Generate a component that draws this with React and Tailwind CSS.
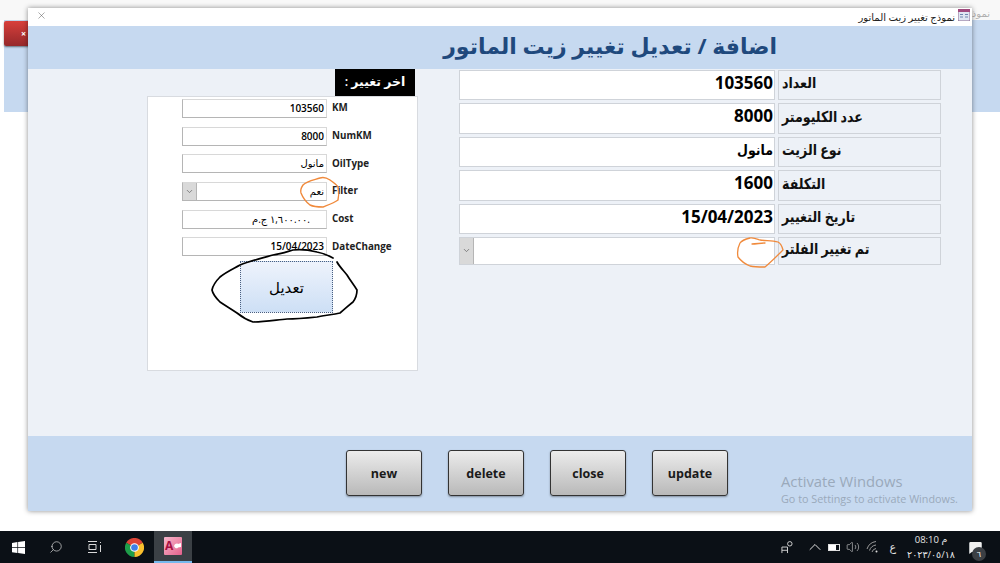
import { Search, ChevronUp, ChevronDown, Volume2, X, MessageSquare } from "lucide-react";

const arabic = "font-['Open_Sans','DejaVu_Sans',sans-serif]";

const mainRows = [
  { label: "العداد", value: "103560" },
  { label: "عدد الكليومتر", value: "8000" },
  { label: "نوع الزيت", value: "مانول", ar: true },
  { label: "التكلفة", value: "1600" },
  { label: "تاريخ التغيير", value: "15/04/2023" },
];

const lastRows = [
  { label: "KM", value: "103560" },
  { label: "NumKM", value: "8000" },
  { label: "OilType", value: "مانول", ar: true },
  { label: "Filter", value: "نعم", ar: true, combo: true },
  { label: "Cost", value: "١,٦٠٠.٠٠ ج.م.", ar: true, pad: true },
  { label: "DateChange", value: "15/04/2023" },
];

function MainLabel({ children }) {
  return (
    <div className="w-[163px] bg-[#edf1f7] border border-[#cfd3d9] flex items-center pl-[3px] pb-[5px]">
      <span dir="rtl" className="origin-left scale-x-[0.84] text-[15px] font-bold text-[#111] whitespace-nowrap">
        {children}
      </span>
    </div>
  );
}

function MainRow({ label, value, ar }) {
  return (
    <div className="flex gap-[3px] h-[30.4px]">
      <div className="w-[316px] bg-white border border-[#cfd3d9] flex items-center justify-end pr-[1px] pb-[5px] text-black">
        {ar ? (
          <span className="text-[14px] font-bold origin-right scale-x-[0.9]">{value}</span>
        ) : (
          <span className="text-[17px] font-bold">{value}</span>
        )}
      </div>
      <MainLabel>{label}</MainLabel>
    </div>
  );
}

function ComboArrow() {
  return (
    <div className="w-[14px] h-full bg-[#d9d9d9] border-r border-[#b5b5b5] flex items-center justify-center shrink-0">
      <ChevronDown size={9} className="text-[#666]" />
    </div>
  );
}

function LastRow({ label, value, ar, combo, pad }) {
  return (
    <div className="flex items-center h-[19px]">
      <div className="w-[145px] h-full bg-white border border-[#d8d8d8] border-b-[#b5b5b5] border-l-[#b5b5b5] flex items-center justify-between text-black">
        {combo ? <ComboArrow /> : <span />}
        <span
          className={`whitespace-nowrap ${pad ? "pr-[16px]" : "pr-[2px]"} ${ar ? "text-[10px] font-normal" : "text-[10px] font-semibold"}`}
        >
          {value}
        </span>
      </div>
      <div className="ml-[5px] text-[9.8px] font-bold text-[#222]">{label}</div>
    </div>
  );
}

function FooterButton({ children }) {
  return (
    <button className="w-[76px] h-[46px] pt-[2px] rounded-[3px] border border-[#333] bg-gradient-to-b from-[#ececec] to-[#b9b9b9] text-[12.5px] font-bold text-[#1a1a1a] shadow-[0_1px_2px_rgba(0,0,0,0.35)]">
      {children}
    </button>
  );
}

function ChromeIcon() {
  return (
    <svg width="19" height="19" viewBox="0 0 20 20">
      <path d="M10 10 L18.7 5 A10 10 0 0 0 1.3 5 Z" fill="#dd4437" />
      <path d="M10 10 L1.3 5 A10 10 0 0 0 10 20 Z" fill="#1e9e4a" />
      <path d="M10 10 L10 20 A10 10 0 0 0 18.7 5 Z" fill="#fbc02d" />
      <circle cx="10" cy="10" r="4.6" fill="#fff" />
      <circle cx="10" cy="10" r="3.5" fill="#3f7fe8" />
    </svg>
  );
}

function AccessIcon() {
  return (
    <div className="relative w-[18px] h-[18px] rounded-[1px] bg-gradient-to-br from-[#f6b6cc] to-[#e4608c]">
      <div className="absolute left-[1px] top-[2px] text-[12px] font-bold leading-[14px] text-[#a80f42]">A</div>
      <svg width="18" height="18" viewBox="0 0 18 18" className="absolute inset-0">
        <path d="M10 9 C11 6.5 13 6 14 7 L17 6 V10 L14 10.5 C13 12 11 11.5 10 9Z" fill="#fff" />
      </svg>
    </div>
  );
}

function WifiFan() {
  return (
    <svg width="14" height="14" viewBox="0 0 14 14" fill="none" stroke="#9a9a9a" strokeWidth="1">
      <path d="M1 9 A11 11 0 0 1 10 1.5 M3.5 10.5 A8 8 0 0 1 10 5 M6 12 A5 5 0 0 1 10 8.5" />
      <circle cx="10.5" cy="11.5" r="1" fill="#e0e0e0" stroke="none" />
    </svg>
  );
}

function Annotations() {
  return (
    <svg width="1000" height="563" viewBox="0 0 1000 563" fill="none" strokeLinecap="round" strokeLinejoin="round" className="absolute inset-0 pointer-events-none">
      <path
        d="M333 258 C326 254 322 253 317 252 C309 250 301 249 293 250 C286 252 280 254 273 255 C262 258 250 261 240 265 C233 269 226 272 220 277 C216 281 213 285 212 290 C213 295 216 298 220 302 C226 306 231 309 237 313 C242 317 247 320 253 322 C264 322 276 320 287 319 C297 319 307 318 317 317 C325 315 332 315 340 313 C345 309 349 305 353 302 C356 298 357 294 357 290 C354 285 350 280 347 275 C343 270 339 266 337 262"
        stroke="#000"
        strokeWidth="1.7"
      />
      <path
        d="M330 180 C327 178 323 177 320 178 C314 180 307 181 303 185 C301 188 300 190 301 193 C303 198 306 202 310 205 C314 207 319 207 323 207 C328 205 334 203 338 200 C339 196 339 191 338 187 C336 184 333 182 330 180"
        stroke="#f08a3c"
        strokeWidth="1.4"
      />
      <path
        d="M750 238 C746 239 742 240 740 243 C738 247 737 252 738 257 C741 261 745 264 750 266 C755 267 760 267 765 267 C771 262 777 256 783 250 C782 246 780 243 778 242 C772 240 766 241 760 240 C757 239 753 237 750 238 M752 244 C756 244 761 243 765 243"
        stroke="#f08a3c"
        strokeWidth="1.3"
      />
    </svg>
  );
}

export default function App() {
  return (
    <div className={`relative w-[1000px] h-[563px] overflow-hidden flex flex-col bg-white ${arabic}`}>
      {/* access behind the popup */}
      <div className="relative flex-1 min-h-0 bg-white">
        <div className="h-[20px] bg-[#f8f8f8]" />
        <div className="h-[92px] ml-[4px] bg-[#c6d9f0]" />
        <div className="absolute left-[4px] top-[21px] w-[30px] h-[25px] rounded-[2px] bg-gradient-to-b from-[#d8403c] to-[#96282a] shadow-[0_1px_2px_rgba(0,0,0,0.5)] flex items-center pl-[17px] text-[9px] font-bold text-white">
          ×
        </div>
        <div dir="rtl" className="absolute right-[10px] top-[6px] text-[10px] text-[#b0b0b0]">نموذج</div>

        <div className="absolute left-[28px] top-[8px] w-[944px] h-[503px] flex flex-col bg-white shadow-[0_0_5px_rgba(0,0,0,0.45)]">
          <div className="h-[18px] bg-white flex items-center justify-between pl-[8px] pr-[2px]">
            <X size={11} strokeWidth={1} className="-mt-[4px] text-[#444]" />
            <div className="flex items-center gap-[3px]">
              <span dir="rtl" className="text-[10px] text-[#222]">نموذج تغيير زيت الماتور</span>
              <svg width="12" height="12" viewBox="0 0 12 12" className="-mt-[4px]">
                <rect width="12" height="12" fill="#dfe6f2" stroke="#8b6a92" />
                <rect x="0" y="0" width="12" height="3" fill="#a04a7e" />
                <path d="M2 5.5h3M7 5.5h3M2 8h3M7 8h3" stroke="#6f86ad" />
              </svg>
            </div>
          </div>

          <div className="h-[43px] bg-[#c6d9f0] flex items-center justify-end pr-[195px] pb-[5px] shrink-0">
            <h1 dir="rtl" className="text-[22px] font-bold text-[#1f497d] whitespace-nowrap">
              اضافة / تعديل تغيير زيت الماتور
            </h1>
          </div>

          <div className="flex-1 min-h-0 bg-[#edf1f7] flex items-start">
            <div className="ml-[119px] w-[271px] flex flex-col items-end">
              <div dir="rtl" className="w-[80px] h-[27px] mr-[3px] bg-black text-white text-[12.5px] font-semibold flex items-center justify-center">
                اخر تغيير :
              </div>
              <div className="relative w-[271px] h-[275px] bg-white border border-[#d8dbe0] pl-[34px] pt-[2px]">
                <div className="flex flex-col gap-[8.7px]">
                  {lastRows.map((row) => (
                    <LastRow key={row.label} {...row} />
                  ))}
                </div>
                <button className="mt-[5px] ml-[58px] w-[93px] h-[52px] border border-dotted border-[#4a5f80] bg-gradient-to-b from-[#eef3fc] to-[#cddff5] text-[15px] font-normal text-black">
                  تعديل
                </button>
              </div>
            </div>

            <div className="ml-[41px] pt-[1px] flex flex-col gap-[3px]">
              {mainRows.map((row) => (
                <MainRow key={row.label} {...row} />
              ))}
              <div className="flex gap-[3px] h-[28px]">
                <div className="w-[316px] bg-white border border-[#cfd3d9] flex items-center">
                  <ComboArrow />
                </div>
                <MainLabel>تم تغيير الفلتر</MainLabel>
              </div>
            </div>
          </div>

          <div className="relative h-[75px] bg-[#c6d9f0] flex items-center gap-[26px] pl-[318px] pb-[1px] shrink-0">
            <FooterButton>new</FooterButton>
            <FooterButton>delete</FooterButton>
            <FooterButton>close</FooterButton>
            <FooterButton>update</FooterButton>
            <div className="absolute left-[753px] top-[36px] text-[#9aa9bb] pointer-events-none">
              <div className="text-[14.8px] leading-[18px]">Activate Windows</div>
              <div className="text-[10.8px] leading-[18px] whitespace-nowrap">Go to Settings to activate Windows.</div>
            </div>
          </div>
        </div>
      </div>

      <div className="h-[32px] bg-[#0b1016] flex items-center shrink-0 text-white">
        <div className="w-[37px] flex justify-center">
          <svg width="13" height="13" viewBox="0 0 13 13" fill="#fff">
            <path d="M0 1.9 5.4 1.1V6.2H0ZM6.1 1 13 0V6.2H6.1ZM0 6.9H5.4V12L0 11.2ZM6.1 6.9H13V13L6.1 12.1Z" />
          </svg>
        </div>
        <div className="w-[38px] flex justify-center">
          <Search size={14} strokeWidth={1.2} className="-scale-x-100 text-[#d8d8d8]" />
        </div>
        <div className="w-[39px] flex justify-center">
          <svg width="14" height="12" viewBox="0 0 14 12" fill="none" stroke="#d8d8d8">
            <path d="M0 .5h9M0 11.5h9M1 3.5h7v5H1zM12.5 1v1M12.5 4v7" />
          </svg>
        </div>
        <div className="w-[40px] flex justify-center">
          <ChromeIcon />
        </div>
        <div className="w-[38px] h-full bg-[#3b4045] border-b-2 border-[#76b9ed] flex items-center justify-center">
          <AccessIcon />
        </div>

        <div className="ml-auto flex items-center h-full">
          <svg width="13" height="13" viewBox="0 0 14 14" fill="none" stroke="#d8d8d8" className="mr-[11px]">
            <circle cx="9.5" cy="3" r="2.4" />
            <path d="M1 13V6.5h6V13M1 10h6" />
          </svg>
          <ChevronUp size={20} strokeWidth={1.2} className="mr-[3px] text-[#e0e0e0]" />
          <div className="w-[12px] h-[7px] border border-[#e0e0e0] mr-[6px]">
            <div className="w-[7px] h-full bg-white" />
          </div>
          <Volume2 size={14} strokeWidth={1} className="mr-[6px] text-[#e0e0e0]" />
          <div className="mr-[9px]">
            <WifiFan />
          </div>
          <span className="text-[11px] text-[#e0e0e0] mr-[9px]">ع</span>
          <div className="w-[52px] flex flex-col items-center text-[9.5px] leading-[15px] text-[#e6e6e6]">
            <span className="whitespace-nowrap">م 08:10</span>
            <span className="whitespace-nowrap">٢٠٢٣/٠٥/١٨</span>
          </div>
          <div className="relative ml-[11px] mr-[16px] w-[16px]">
            <MessageSquare size={15} fill="#f0f0f0" strokeWidth={0} />
            <div className="absolute left-[4px] top-[7px] w-[14px] h-[14px] rounded-full bg-[#3b3f44] flex items-center justify-center text-[8px]">
              ٦
            </div>
          </div>
        </div>
      </div>

      <Annotations />
    </div>
  );
}
